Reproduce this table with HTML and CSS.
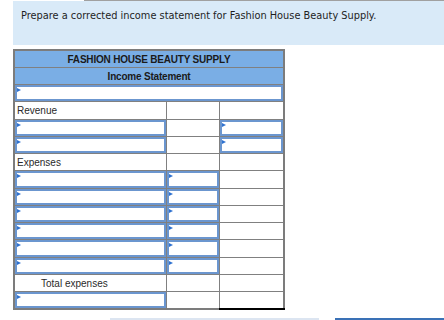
FILE: index.html
```html
<!DOCTYPE html>
<html>
<head>
<meta charset="utf-8">
<link rel="stylesheet" href="styles.css">
</head>
<body>
<div class="page">
  <div class="tabline"><span class="tab"></span><span class="rule"></span></div>
  <div class="prompt">Prepare a corrected income statement for Fashion House Beauty Supply.</div>
  <table class="stmt">
    <colgroup><col class="c1"><col class="c2"><col class="c3"></colgroup>
    <tr class="r17"><td colspan="3" class="head">FASHION HOUSE BEAUTY SUPPLY</td></tr>
    <tr class="r17"><td colspan="3" class="head">Income Statement</td></tr>
    <tr class="r17"><td colspan="3" class="in"><div class="box"></div></td></tr>
    <tr class="r18"><td class="lbl">Revenue</td><td></td><td></td></tr>
    <tr class="r17"><td class="in"><div class="box"></div></td><td></td><td class="in"><div class="box"></div></td></tr>
    <tr class="r17"><td class="in"><div class="box"></div></td><td></td><td class="in"><div class="box"></div></td></tr>
    <tr class="r17"><td class="lbl">Expenses</td><td></td><td></td></tr>
    <tr class="r18"><td class="in"><div class="box"></div></td><td class="in"><div class="box"></div></td><td></td></tr>
    <tr class="r17"><td class="in"><div class="box"></div></td><td class="in"><div class="box"></div></td><td></td></tr>
    <tr class="r17"><td class="in"><div class="box"></div></td><td class="in"><div class="box"></div></td><td></td></tr>
    <tr class="r17"><td class="in"><div class="box"></div></td><td class="in"><div class="box"></div></td><td></td></tr>
    <tr class="r18"><td class="in"><div class="box"></div></td><td class="in"><div class="box"></div></td><td></td></tr>
    <tr class="r17"><td class="in"><div class="box"></div></td><td class="in"><div class="box"></div></td><td></td></tr>
    <tr class="r17"><td class="lbl indent">Total expenses</td><td class="topline"></td><td></td></tr>
    <tr class="r17"><td class="in"><div class="box"></div></td><td></td><td class="dbl"></td></tr>
  </table>
  <div class="buttons"><span class="btn-light"></span><span class="btn-dark"></span></div>
</div>
</body>
</html>
```

FILE: styles.css
```css
html, body {
  margin: 0;
  padding: 0;
  background: #ffffff;
}
.page {
  width: 444px;
  height: 320px;
  overflow: hidden;
  padding-left: 13px;
  box-sizing: border-box;
}
.tabline {
  display: flex;
  height: 1px;
}
.tab {
  width: 71px;
}
.rule {
  flex: 1;
  background: #a0a0a0;
}
.prompt {
  height: 44px;
  box-sizing: border-box;
  background: #d9eaf8;
  padding: 9px 0 0 8px;
  font-family: "DejaVu Sans", Verdana, sans-serif;
  font-size: 9.8px;
  color: #1e1e1e;
  white-space: nowrap;
}
.stmt {
  margin-top: 4px;
  border-collapse: collapse;
  table-layout: fixed;
  width: 270px;
  border: 2px solid #7c7c7c;
  font-family: "Liberation Sans", Arial, sans-serif;
  font-size: 10px;
  color: #222;
}
.c1 { width: 152px; }
.c2 { width: 53px; }
.c3 { width: 65px; }
.stmt td {
  border: 1px solid #808080;
  padding: 0;
}
.r17 td { height: 16px; }
.r18 td { height: 17px; }
.head {
  background: #7aaee5;
  text-align: center;
  font-weight: bold;
  letter-spacing: -0.2px;
  color: #1a1a1a;
}
.lbl {
  padding-left: 2px !important;
  vertical-align: middle;
  color: #2a2a2a;
}
.indent {
  padding-left: 26px !important;
}
.in {
  position: relative;
}
.box {
  position: absolute;
  inset: 0;
  border: 2px solid #6b96cf;
}
.box::before {
  content: "";
  position: absolute;
  left: 0;
  top: 1px;
  border-left: 4px solid #2f72d0;
  border-top: 2px solid transparent;
  border-bottom: 2px solid transparent;
}
.stmt td.topline {
  border-top: 1px solid #000;
}
.stmt td.dbl {
  border-top: 1px solid #000;
  border-bottom: 2px solid #000;
}
.buttons {
  display: flex;
  margin-top: 8px;
  padding-left: 97px;
  gap: 16px;
}
.btn-light {
  width: 209px;
  height: 10px;
  background: #dce5f1;
}
.btn-dark {
  flex: 1;
  height: 10px;
  background: #3a71b6;
}
```
